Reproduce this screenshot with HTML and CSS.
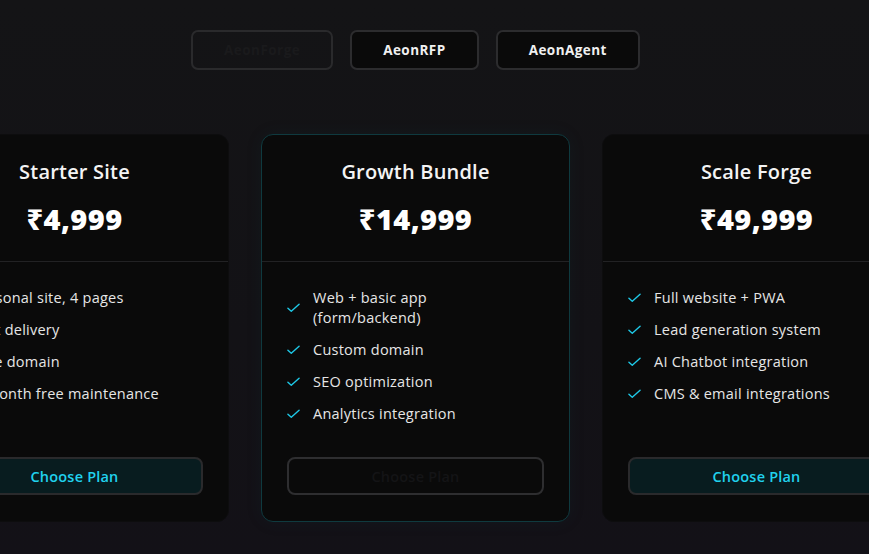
FILE: index.html
```html
<!DOCTYPE html>
<html lang="en">
<head>
<meta charset="utf-8">
<title>Pricing</title>
<link rel="stylesheet" href="styles.css">
</head>
<body>
<main class="page">
  <nav class="tabs">
    <button class="tab tab-muted">AeonForge</button>
    <button class="tab">AeonRFP</button>
    <button class="tab">AeonAgent</button>
  </nav>
  <section class="plans">
    <article class="card">
      <header class="card-head">
        <h2 class="title">Starter Site</h2>
        <div class="price">₹4,999</div>
      </header>
      <ul class="features">
        <li><svg class="check" viewBox="0 0 14 10"><path d="M1 5.2l3.6 3.4L13 1"/></svg><span>Personal site, 4 pages</span></li>
        <li><svg class="check" viewBox="0 0 14 10"><path d="M1 5.2l3.6 3.4L13 1"/></svg><span>Fast delivery</span></li>
        <li><svg class="check" viewBox="0 0 14 10"><path d="M1 5.2l3.6 3.4L13 1"/></svg><span>Free domain</span></li>
        <li><svg class="check" viewBox="0 0 14 10"><path d="M1 5.2l3.6 3.4L13 1"/></svg><span>1-month free maintenance</span></li>
      </ul>
      <button class="cta">Choose Plan</button>
    </article>
    <article class="card card-featured">
      <header class="card-head">
        <h2 class="title">Growth Bundle</h2>
        <div class="price">₹14,999</div>
      </header>
      <ul class="features">
        <li><svg class="check" viewBox="0 0 14 10"><path d="M1 5.2l3.6 3.4L13 1"/></svg><span>Web + basic app<br>(form/backend)</span></li>
        <li><svg class="check" viewBox="0 0 14 10"><path d="M1 5.2l3.6 3.4L13 1"/></svg><span>Custom domain</span></li>
        <li><svg class="check" viewBox="0 0 14 10"><path d="M1 5.2l3.6 3.4L13 1"/></svg><span>SEO optimization</span></li>
        <li><svg class="check" viewBox="0 0 14 10"><path d="M1 5.2l3.6 3.4L13 1"/></svg><span>Analytics integration</span></li>
      </ul>
      <button class="cta cta-dark">Choose Plan</button>
    </article>
    <article class="card">
      <header class="card-head">
        <h2 class="title">Scale Forge</h2>
        <div class="price">₹49,999</div>
      </header>
      <ul class="features">
        <li><svg class="check" viewBox="0 0 14 10"><path d="M1 5.2l3.6 3.4L13 1"/></svg><span>Full website + PWA</span></li>
        <li><svg class="check" viewBox="0 0 14 10"><path d="M1 5.2l3.6 3.4L13 1"/></svg><span>Lead generation system</span></li>
        <li><svg class="check" viewBox="0 0 14 10"><path d="M1 5.2l3.6 3.4L13 1"/></svg><span>AI Chatbot integration</span></li>
        <li><svg class="check" viewBox="0 0 14 10"><path d="M1 5.2l3.6 3.4L13 1"/></svg><span>CMS &amp; email integrations</span></li>
      </ul>
      <button class="cta">Choose Plan</button>
    </article>
  </section>
</main>
</body>
</html>
```

FILE: styles.css
```css
* { box-sizing: border-box; }
html, body { margin: 0; padding: 0; }
body {
  width: 869px;
  height: 554px;
  overflow: hidden;
  background: linear-gradient(180deg, #141416 0%, #131216 60%, #131117 100%);
  font-family: "Open Sans", "Noto Sans", "DejaVu Sans", sans-serif;
  color: #f2f2f2;
}
.page {
  width: 831px;
  padding-top: 30px;
}
.tabs {
  display: flex;
  justify-content: center;
  gap: 17px;
}
.tab {
  height: 40px;
  padding: 0 31px;
  border: 2px solid #2c2c2e;
  border-radius: 7px;
  background: #0a0a0a;
  color: #f0f0f0;
  font-family: inherit;
  font-size: 13.5px;
  font-weight: 700;
  letter-spacing: 0.45px;
}
.tab-muted {
  background: transparent;
  color: #1a1a1c;
  border-color: #2a2a2c;
}
.plans {
  margin-top: 64px;
  display: flex;
  justify-content: center;
  gap: 32px;
}
.card {
  flex: 0 0 309px;
  display: flex;
  flex-direction: column;
  background: #0a0a0a;
  border: 1px solid #0d0d0e;
  border-radius: 12px;
  padding-bottom: 26px;
}
.card-featured {
  border-color: #0f3a3f;
  box-shadow: 0 0 18px rgba(20, 90, 100, 0.08);
}
.card-head {
  padding: 23px 24px 24px;
  text-align: center;
  border-bottom: 1px solid #222224;
}
.title {
  margin: 0;
  font-size: 20px;
  line-height: 28px;
  font-weight: 600;
  letter-spacing: 0.2px;
  color: #f4f4f4;
}
.price {
  margin-top: 15px;
  font-size: 29px;
  line-height: 36px;
  font-weight: 800;
  letter-spacing: 0.4px;
  color: #ffffff;
}
.features {
  list-style: none;
  margin: 0;
  padding: 26px 25px 33px;
  display: flex;
  flex-direction: column;
  gap: 12px;
}
.features li {
  display: flex;
  align-items: center;
  gap: 13px;
  font-size: 14.5px;
  line-height: 20px;
  letter-spacing: 0.25px;
  color: #e6e6e6;
}
.check {
  flex: 0 0 13px;
  width: 13px;
  height: 10px;
  fill: none;
  stroke: #1ec8e6;
  stroke-width: 1.5;
  stroke-linecap: round;
  stroke-linejoin: round;
}
.cta {
  margin: auto 25px 0;
  height: 38px;
  border: 2px solid #2a2a2c;
  border-radius: 8px;
  background: #081c1f;
  color: #20d2ee;
  font-family: inherit;
  font-size: 14.5px;
  font-weight: 600;
  letter-spacing: 0.2px;
}
.cta-dark {
  background: #0a0a0a;
  color: #141416;
  border-color: #2e2e30;
}
```
